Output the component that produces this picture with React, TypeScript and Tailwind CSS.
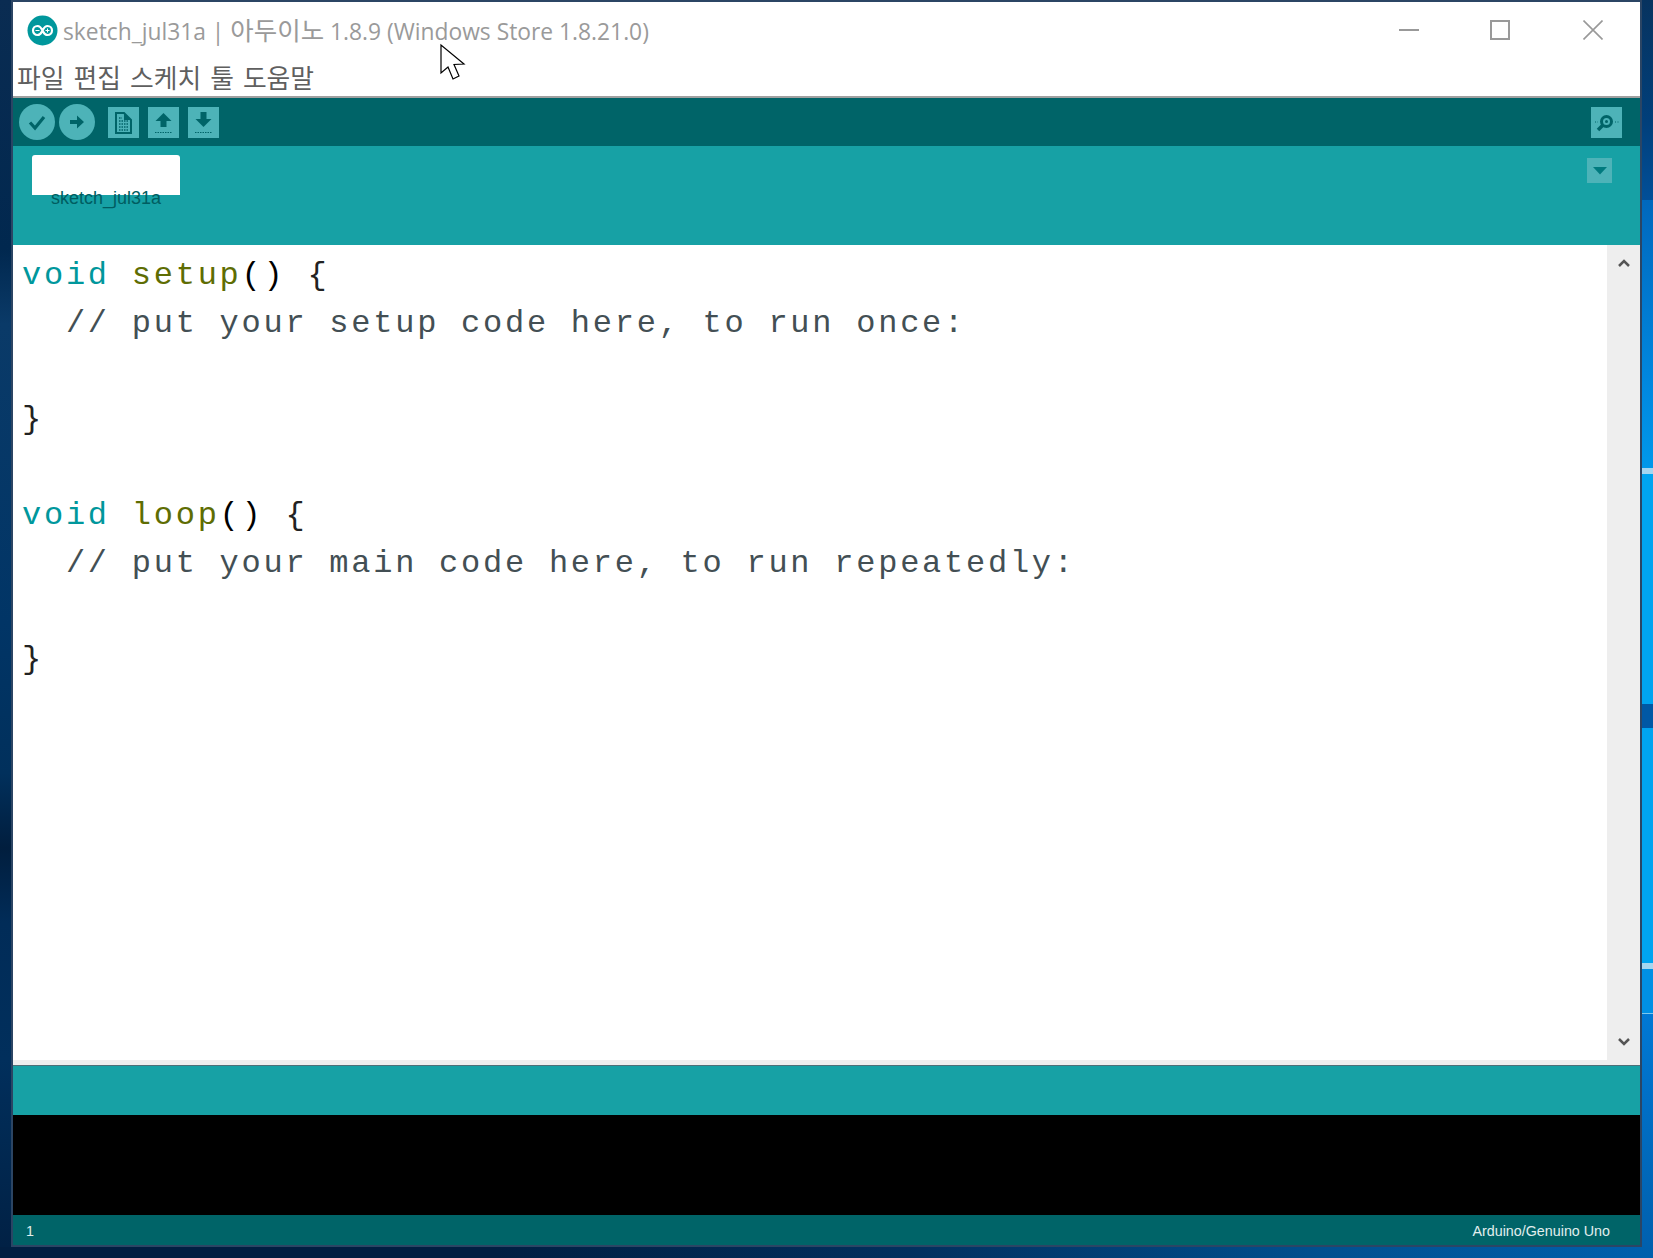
/**
 * Arduino IDE window on a Windows desktop.
 */

const UI_FONT = "font-['Open_Sans','Noto_Sans_CJK_KR',sans-serif]";

function Logo() {
  return (
    <svg width="31" height="31" viewBox="0 0 31 31" className="shrink-0">
      <circle cx="15.5" cy="15.5" r="15" fill="#00979c" />
      <path d="M1 16a15 15 0 0 0 29 0a15 15 0 0 1-29 0z" fill="#00787c" />
      <path
        d="M10.5 11c3 0 4 2.500 5 4.500c1 -2 2-4.500 5-4.500a4.500 4.500 0 0 1 0 9c-3 0-4-2.500-5-4.500c-1 2-2 4.500-5 4.500a4.500 4.500 0 0 1 0-9z"
        fill="none"
        stroke="#ffffff"
        strokeWidth="2.200"
      />
      <path d="M8.500 15.500h4M18.500 15.500h4M20.500 13.500v4" stroke="#ffffff" strokeWidth="1" />
    </svg>
  );
}

function WindowControls() {
  return (
    <div className="ml-auto flex items-center pr-[37px] text-[#999999]">
      <svg width="20" height="20" viewBox="0 0 20 20">
        <path d="M0 10h20" stroke="currentColor" strokeWidth="2" />
      </svg>
      <svg width="20" height="20" viewBox="0 0 20 20" className="ml-[71px]">
        <rect x="1" y="1" width="18" height="18" fill="none" stroke="currentColor" strokeWidth="2" />
      </svg>
      <svg width="20" height="20" viewBox="0 0 20 20" className="ml-[73px]">
        <path d="M0.500 0.500l19 19M19.500 0.500l-19 19" stroke="currentColor" strokeWidth="1.600" />
      </svg>
    </div>
  );
}

function RoundButton({ children }: { children: React.ReactNode }) {
  return (
    <div className="flex h-9 w-9 items-center justify-center rounded-full bg-[#4db3b8]">
      <svg width="20" height="20" viewBox="0 0 20 20">
        {children}
      </svg>
    </div>
  );
}

function SquareButton({ children, className = '' }: { children: React.ReactNode; className?: string }) {
  return (
    <div className={`flex h-[31px] w-[31px] items-center justify-center bg-[#4db3b8] ${className}`}>
      <svg width="31" height="31" viewBox="0 0 31 31">
        {children}
      </svg>
    </div>
  );
}

function Toolbar() {
  const dark = '#006468';
  return (
    <div className="flex h-12 shrink-0 items-center bg-[#006468] pl-[6px] pr-[18px]">
      <RoundButton>
        <path d="M3 10.500l5 5.500l9-11" fill="none" stroke={dark} strokeWidth="3.200" />
      </RoundButton>
      <div className="ml-1">
        <RoundButton>
          <path d="M3 8h7V3.500l7 6.500l-7 6.500V12H3z" fill={dark} />
        </RoundButton>
      </div>
      <SquareButton className="ml-[13px]">
        <path d="M8 6h8l7 7v13H8z" fill="none" stroke={dark} strokeWidth="2" />
        <path d="M16 6v7h7" fill={dark} />
        <path d="M11 11h3M11 14h10M11 17h10M11 20h10M11 23h10" stroke={dark} strokeWidth="1.500" strokeDasharray="1.500 1" />
      </SquareButton>
      <SquareButton className="ml-[9px]">
        <path d="M15.500 6l8 8h-5v6h-6v-6h-5z" fill={dark} />
        <path d="M7 25.500h17" stroke={dark} strokeWidth="1" strokeDasharray="1.500 1" />
      </SquareButton>
      <SquareButton className="ml-[9px]">
        <path d="M12.500 5h6v7h5l-8 8l-8-8h5z" fill={dark} />
        <path d="M7 25.500h17" stroke={dark} strokeWidth="1" strokeDasharray="1.500 1" />
      </SquareButton>
      <SquareButton className="ml-auto">
        <circle cx="15.500" cy="14.500" r="5" fill="none" stroke={dark} strokeWidth="3" />
        <circle cx="15.500" cy="14.500" r="1.500" fill={dark} />
        <path d="M11.500 18.500l-4.500 4.500" stroke={dark} strokeWidth="3.500" />
        <path d="M4 15h3M24 15h4" stroke={dark} strokeWidth="1" strokeDasharray="1 1.500" />
      </SquareButton>
    </div>
  );
}

function TabStrip() {
  return (
    <div className="flex h-[99px] shrink-0 items-start bg-[#17a1a5] pl-[19px] pr-7 pt-[9px]">
      <div className="flex h-10 w-[148px] justify-center rounded-t-[3px] bg-white">
        <span className="mt-[33px] h-5 font-['Liberation_Sans',sans-serif] text-[18px] leading-5 text-[#005d61]">
          sketch_jul31a
        </span>
      </div>
      <div className="ml-auto mt-[3px] flex h-[25px] w-[25px] items-center justify-center bg-[#4db3b8]">
        <svg width="14" height="8" viewBox="0 0 14 8">
          <path d="M0 0h14L7 7.500z" fill="#007a7e" />
        </svg>
      </div>
    </div>
  );
}

const KEYWORD = 'text-[#00979c]';
const FUNC = 'text-[#5e6d03]';
const COMMENT = 'text-[#434f54]';
const PUNCT = 'text-[#000000]';

type Token = [string, string];

const CODE: Token[][] = [
  [['void', KEYWORD], [' ', PUNCT], ['setup', FUNC], ['()', PUNCT], [' {', 'text-[#222222]']],
  [['  // put your setup code here, to run once:', COMMENT]],
  [],
  [['}', 'text-[#222222]']],
  [],
  [['void', KEYWORD], [' ', PUNCT], ['loop', FUNC], ['()', PUNCT], [' {', 'text-[#222222]']],
  [['  // put your main code here, to run repeatedly:', COMMENT]],
  [],
  [['}', 'text-[#222222]']],
];

function Editor() {
  return (
    <div className="flex min-h-0 flex-1 bg-white">
      <div className="flex-1 whitespace-pre pl-[9px] pt-[7px] font-['Liberation_Mono',monospace] text-[32px] leading-[48px] tracking-[2.750px]">
        {CODE.map((tokens, i) => (
          <div key={i} className="h-12">
            {tokens.map(([text, color], j) => (
              <span key={j} className={color}>
                {text}
              </span>
            ))}
          </div>
        ))}
      </div>
      <div className="flex w-[33px] flex-col items-center justify-between bg-[#eeeeee] pb-[14px] pt-[14px]">
        <svg width="12" height="8" viewBox="0 0 12 8">
          <path d="M1 7l5-5l5 5" fill="none" stroke="#555555" strokeWidth="2.500" />
        </svg>
        <svg width="12" height="8" viewBox="0 0 12 8">
          <path d="M1 1l5 5l5-5" fill="none" stroke="#555555" strokeWidth="2.500" />
        </svg>
      </div>
    </div>
  );
}

function Cursor() {
  return (
    <svg width="27" height="42" viewBox="0 0 27 40" className="absolute left-[440px] top-[43px]">
      <path
        d="M1 1v28l7-6l5 12l6-3l-5-11.500l10-0.500z"
        fill="#ffffff"
        stroke="#000000"
        strokeWidth="1.200"
        strokeLinejoin="miter"
      />
    </svg>
  );
}

export default function App() {
  return (
    <div className="relative flex h-[1258px] w-[1653px] flex-col overflow-hidden">
      <div className="flex h-[1247px] shrink-0">
        {/* desktop, left of the window */}
        <div className="w-[11px] shrink-0 bg-[linear-gradient(to_bottom,#0a2c52_0%,#01284f_20%,#0a3a68_26%,#013566_50%,#01305c_62%,#011e3e_68%,#012c58_74%,#012f5c_85%,#012145_100%)]" />

        <div className="flex w-[1631px] shrink-0 flex-col border-2 border-[#2b4564]">
          <div className={`flex h-[58px] shrink-0 items-center bg-white pb-[2px] pl-3.5 ${UI_FONT}`}>
            <Logo />
            <span className="ml-[5px] whitespace-pre text-[22.800px] text-[#9a9a9a]">
              sketch_jul31a | <span className="text-[25.500px]">아두이노</span> 1.8.9 (Windows Store 1.8.21.0)
            </span>
            <WindowControls />
          </div>
          <div className={`flex h-9 shrink-0 items-center gap-[9px] bg-white pl-1 text-[25.800px] text-[#5f5f5f] ${UI_FONT}`}>
            <span>파일</span>
            <span>편집</span>
            <span>스케치</span>
            <span>툴</span>
            <span>도움말</span>
          </div>
          <div className="h-0.5 shrink-0 bg-[#a0a0a0]" />
          <Toolbar />
          <TabStrip />
          <Editor />
          <div className="h-[5px] shrink-0 bg-[#eeeeee]" />
          <div className="h-px shrink-0 bg-[#4f6f78]" />
          <div className="h-[49px] shrink-0 bg-[#17a1a5]" />
          <div className="h-[100px] shrink-0 bg-black" />
          <div className="flex h-[30px] shrink-0 items-center justify-between bg-[#006468] pl-[13px] pr-[30px] pt-1 font-['Liberation_Sans',sans-serif] text-[14.300px] text-[#e2eeee]">
            <span>1</span>
            <span>Arduino/Genuino Uno</span>
          </div>
        </div>

        {/* desktop, right of the window */}
        <div className="flex w-[11px] shrink-0 flex-col">
          <div className="h-[200px] bg-[linear-gradient(to_bottom,#07335f,#013f7a_60%,#014f98)]" />
          <div className="h-[268px] bg-[linear-gradient(to_bottom,#0068bd,#0088e0_70%,#0098ea)]" />
          <div className="h-1.5 bg-[#a5d6f0]" />
          <div className="h-[230px] bg-[#00a4f0]" />
          <div className="h-6 bg-[#0058a5]" />
          <div className="h-[235px] bg-[#00a4f0]" />
          <div className="h-1.5 bg-[#a5d6f0]" />
          <div className="h-[44px] bg-[#0090e4]" />
          <div className="h-px bg-[#7cc8ee]" />
          <div className="flex-1 bg-[linear-gradient(to_bottom,#0078d4,#0060ae)]" />
        </div>
      </div>

      {/* desktop, under the window */}
      <div className="min-h-0 flex-1 bg-[linear-gradient(to_right,#011f42,#011f42_30%,#02305e_55%,#01508f_80%,#0060ad)]" />

      <Cursor />
    </div>
  );
}
